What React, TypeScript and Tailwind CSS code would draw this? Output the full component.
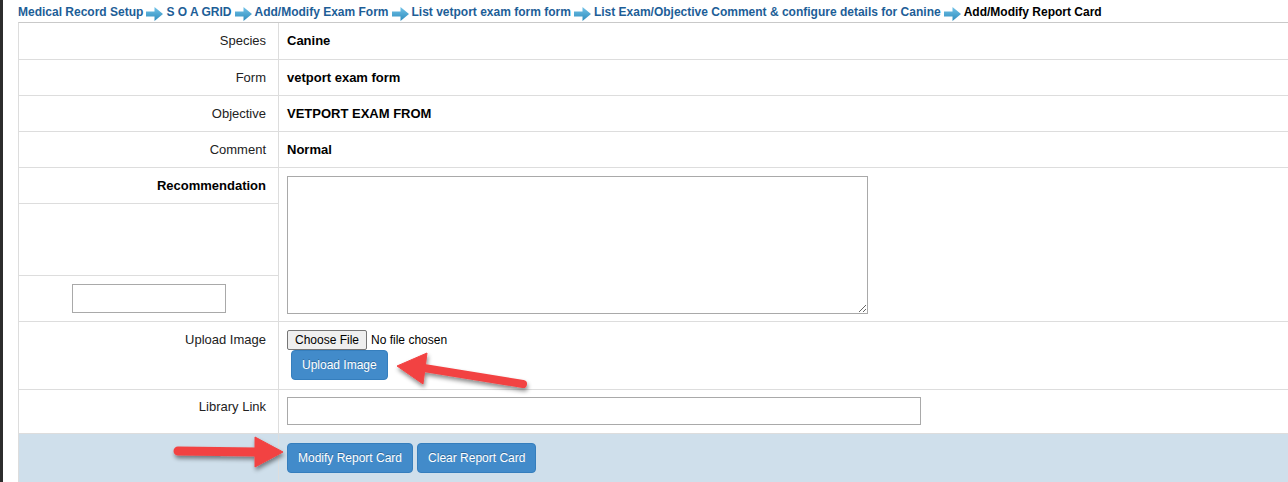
import React from 'react';

const crumbs = [
  'Medical Record Setup',
  'S O A GRID',
  'Add/Modify Exam Form',
  'List vetport exam form form',
  'List Exam/Objective Comment & configure details for Canine',
];

const CrumbArrow = () => (
  <svg width="17" height="14" viewBox="0 0 17 14" className="mx-[3px] mt-[3px] shrink-0">
    <defs>
      <linearGradient id="crumbArrow" x1="0" y1="0" x2="0" y2="1">
        <stop offset="0" stopColor="#72c3e8" />
        <stop offset="1" stopColor="#2e8cbd" />
      </linearGradient>
    </defs>
    <path d="M0 4.5h8.5V0L17 7l-8.5 7V9.5H0z" fill="url(#crumbArrow)" />
  </svg>
);

const btn =
  'h-[30px] rounded-[4px] border border-[#357ebd] bg-[#428bca] px-[10px] text-[12px] leading-none text-white [text-shadow:0_-1px_0_rgba(0,0,0,0.25)]';

const cellBorder = 'border-b border-r border-[#dddddd]';
const labelCell = `${cellBorder} pr-3 text-right text-[13px] text-[#222]`;
const valueCell = 'border-b border-[#dddddd] pl-2 text-[13px]';

const InfoRow = ({ label, value, h }: { label: string; value: string; h: string }) => (
  <>
    <div className={`${labelCell} ${h} flex items-center justify-end`}>{label}</div>
    <div className={`${valueCell} ${h} flex items-center font-bold text-black`}>{value}</div>
  </>
);

export default function App() {
  return (
    <div className="relative flex min-h-[482px] bg-white font-['Liberation_Sans',Arial,sans-serif]">
      <div className="w-[3px] shrink-0 bg-[#2d2d2d]" />
      <div className="flex-1 pl-[15px]">
        {/* breadcrumb */}
        <div className="flex h-[22px] items-center whitespace-nowrap pt-[2px] text-[12px] font-bold">
          {crumbs.map((c) => (
            <React.Fragment key={c}>
              <span className="text-[#1d5e97]">{c}</span>
              <CrumbArrow />
            </React.Fragment>
          ))}
          <span className="text-black">Add/Modify Report Card</span>
        </div>

        <div className="grid grid-cols-[260px_1fr] border-l border-t border-[#c9c9c9] border-l-[#dddddd]">
          <InfoRow label="Species" value="Canine" h="h-[37px]" />
          <InfoRow label="Form" value="vetport exam form" h="h-[36px]" />
          <InfoRow label="Objective" value="VETPORT EXAM FROM" h="h-[36px]" />
          <InfoRow label="Comment" value="Normal" h="h-[36px]" />

          <div className={`${labelCell} flex h-[36px] items-center justify-end font-bold text-black`}>
            Recommendation
          </div>
          <div className={`${valueCell} row-span-3 pt-[8px]`}>
            <textarea className="block h-[138px] w-[581px] border border-[#a9a9a9] bg-white" />
          </div>
          <div className={`${cellBorder} h-[72px]`} />
          <div className={`${cellBorder} flex h-[46px] justify-center pt-[8px]`}>
            <input type="text" className="h-[29px] w-[154px] border border-[#a9a9a9] bg-white" />
          </div>

          <div className={`${labelCell} h-[68px] pt-[10px] leading-[16px]`}>Upload Image</div>
          <div className={`${valueCell} h-[68px] pt-[8px]`}>
            <div className="flex items-center text-[12px] text-black">
              <button className="h-[20px] rounded-[2px] border border-[#767676] bg-[#efefef] px-[7px] leading-none">
                Choose File
              </button>
              <span className="ml-[4px]">No file chosen</span>
            </div>
            <button className={`${btn} ml-[4px]`}>Upload Image</button>
          </div>

          <div className={`${labelCell} h-[44px] pt-[9px] leading-[16px]`}>Library Link</div>
          <div className={`${valueCell} h-[44px] pt-[7px]`}>
            <input type="text" className="block h-[28px] w-[634px] border border-[#a9a9a9] bg-white" />
          </div>

          <div className="h-[50px] border-r border-[#dddddd] bg-[#cfdfeb]" />
          <div className="flex h-[50px] items-start gap-[4px] bg-[#cfdfeb] pl-2 pt-[9px]">
            <button className={btn}>Modify Report Card</button>
            <button className={btn}>Clear Report Card</button>
          </div>
        </div>
      </div>

      {/* annotation arrows */}
      <svg className="pointer-events-none absolute left-0 top-0" width="1288" height="482">
        <defs>
          <filter id="shadow" x="-20%" y="-50%" width="140%" height="200%">
            <feDropShadow dx="1" dy="3" stdDeviation="2" floodColor="#000" floodOpacity="0.45" />
          </filter>
        </defs>
        <g filter="url(#shadow)" fill="#f24343" stroke="#f24343">
          <line x1="523" y1="384" x2="424" y2="368" strokeWidth="8" strokeLinecap="round" />
          <polygon points="397,366 427,353 423,384" strokeWidth="1" strokeLinejoin="round" />
          <line x1="178" y1="451" x2="258" y2="452" strokeWidth="9" strokeLinecap="round" />
          <polygon points="255,437 283,452 255,467" strokeWidth="1" strokeLinejoin="round" />
        </g>
      </svg>
    </div>
  );
}
